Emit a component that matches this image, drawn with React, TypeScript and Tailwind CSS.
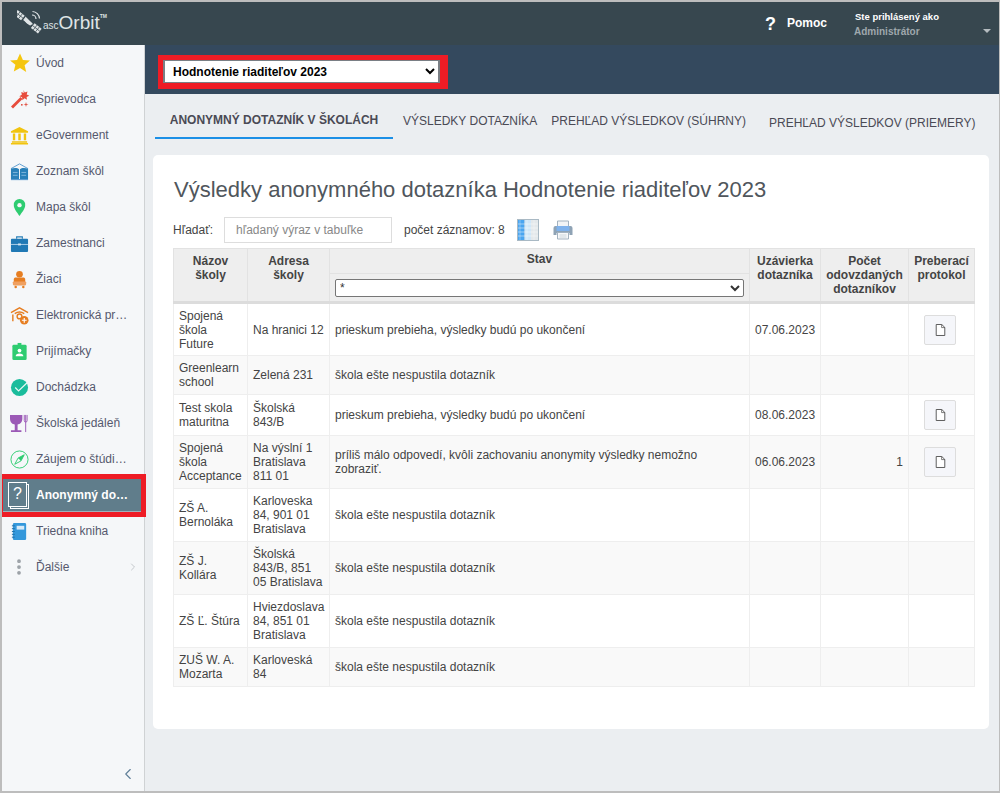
import { ChevronLeft, ChevronRight, MoreVertical } from "lucide-react";
import type { ReactNode } from "react";

const font = "font-['Liberation_Sans',Arial,sans-serif]";

function Star() {
  return (
    <svg viewBox="0 0 20 20" className="h-[20px] w-[20px]">
      <path d="M10 .5l2.900 6.400 7 .7-5.300 4.600 1.600 6.900L10 15l-6.200 3.600 1.600-6.900L.1 7.600l7-.7z" fill="#f5c60f" />
    </svg>
  );
}

function Wand() {
  return (
    <svg viewBox="0 0 20 20" className="h-[20px] w-[20px]">
      <path d="M1 17.500L10.500 8l2 2L3 19.500z" fill="#e74c3c" />
      <path d="M13.500 1l1.200 2.600 2.800-1-.8 2.900 2.600 1.300-2.700 1.200.4 2.800-2.500-1.500-2.100 1.900-.3-2.900-2.800-1 2.500-1.500-.5-2.800 2.500 1z" fill="#e74c3c" />
      <path d="M16 13l.6 1.900 1.900.6-1.900.6-.6 1.900-.6-1.900-1.900-.6 1.900-.6z" fill="#e25548" />
      <rect x="11" y="15" width="1.600" height="1.600" fill="#e25548" />
    </svg>
  );
}

function Bank() {
  return (
    <svg viewBox="0 0 20 20" className="h-[19px] w-[19px]">
      <path d="M10 1L1 5.500V7h18V5.500z" fill="#f1c40f" />
      <path d="M3 8h2.500v7H3zM8.700 8h2.600v7H8.700zM14.500 8H17v7h-2.500zM2 16h16v1.500H2zM1 18h18v1.500H1z" fill="#f1c40f" />
    </svg>
  );
}

function Book() {
  return (
    <svg viewBox="0 0 20 20" className="h-[19px] w-[19px]">
      <path d="M1 7l9-5 9 5" fill="none" stroke="#5b9bd0" strokeWidth="1" />
      <path d="M1 7c3-1 7-1 8.500 .5V18H1zM19 7c-3-1-7-1-8.500 .5V18H19z" fill="#2980b9" />
      <path d="M1 18.500h18" stroke="#5b9bd0" strokeWidth="1.200" />
      <path d="M3 11h5M3 14h5M12 11h5M12 14h5" stroke="#a9d0ee" strokeWidth=".7" />
    </svg>
  );
}

function Pin() {
  return (
    <svg viewBox="0 0 20 20" className="h-[19px] w-[19px]">
      <path d="M10 1a6 6 0 0 0-6 6.500c0 4 4 8 6 11.500 2-3.500 6-7.500 6-11.500A6 6 0 0 0 10 1z" fill="#2ecc71" />
      <circle cx="10" cy="7.500" r="2.300" fill="#f5f7f9" />
    </svg>
  );
}

function Briefcase() {
  return (
    <svg viewBox="0 0 20 20" className="h-[19px] w-[19px]">
      <path d="M7 5V3h6v2" fill="none" stroke="#2980b9" strokeWidth="1.200" />
      <rect x="1" y="5" width="18" height="14" rx="1" fill="#2079b5" />
      <path d="M1 11h18" stroke="#d5e7f4" strokeWidth=".8" />
      <rect x="8.500" y="10" width="3" height="2" fill="#d5e7f4" />
    </svg>
  );
}

function Pupil() {
  return (
    <svg viewBox="0 0 20 20" className="h-[19px] w-[19px]">
      <circle cx="10" cy="4.500" r="3.500" fill="#e67e22" />
      <path d="M4 10c0-1.500 1-2 2-2h8c1 0 2 .5 2 2v6H4z" fill="#e67e22" />
      <rect x="3" y="12" width="14" height="4" rx="1" fill="#f0a060" />
      <circle cx="6" cy="18" r="1.300" fill="#e67e22" />
      <circle cx="14" cy="18" r="1.300" fill="#e67e22" />
    </svg>
  );
}

function Cap() {
  return (
    <svg viewBox="0 0 20 20" className="h-[19px] w-[19px]">
      <path d="M1 7l9-5 9 5" fill="none" stroke="#e67e22" strokeWidth="1.500" />
      <path d="M3 9v7M5 8c3-2 7-2 10 0" fill="none" stroke="#e67e22" strokeWidth="1.500" />
      <circle cx="10" cy="11" r="2.500" fill="none" stroke="#e67e22" strokeWidth="1.500" />
      <circle cx="15" cy="15" r="4.500" fill="#e67e22" />
      <path d="M15 12.500v5M12.500 15h5" stroke="#fff" strokeWidth="1.200" />
    </svg>
  );
}

function Badge() {
  return (
    <svg viewBox="0 0 20 20" className="h-[19px] w-[19px]">
      <rect x="2.500" y="3" width="15" height="16" rx="1.500" fill="#2ecc71" />
      <rect x="8" y="1" width="4" height="3" fill="#2ecc71" />
      <circle cx="10" cy="9" r="2" fill="#fff" />
      <path d="M6 15c0-2 1.500-3 4-3s4 1 4 3z" fill="#fff" />
    </svg>
  );
}

function Check() {
  return (
    <svg viewBox="0 0 20 20" className="h-[19px] w-[19px]">
      <circle cx="10" cy="10" r="9" fill="#1abc9c" />
      <path d="M5.500 10l3.500 3.500L18 5" fill="none" stroke="#e8f8f5" strokeWidth="1.300" />
    </svg>
  );
}

function Cup() {
  return (
    <svg viewBox="0 0 20 20" className="h-[19px] w-[19px]">
      <path d="M0 1h13v4c0 4-3 6-5 6v6h4v2H1v-2h4v-6C3 11 0 9 0 5z" fill="#9b59b6" />
      <path d="M15 1v6c0 1 .5 1.500 1.500 1.500S18 8 18 7V1M16.500 1v18" fill="none" stroke="#9b59b6" strokeWidth="1" />
    </svg>
  );
}

function Compass() {
  return (
    <svg viewBox="0 0 20 20" className="h-[19px] w-[19px]">
      <circle cx="10" cy="10" r="9" fill="none" stroke="#2ecc71" strokeWidth="1" />
      <path d="M15 5l-3.500 6.500L5 15l3.500-6.500z" fill="none" stroke="#2ecc71" strokeWidth="1" />
      <path d="M15 5L8.500 8.500l3 3z" fill="#2ecc71" />
    </svg>
  );
}

function Notebook() {
  return (
    <svg viewBox="0 0 20 20" className="h-[19px] w-[19px]">
      <rect x="3" y="1" width="14" height="18" rx="1.500" fill="#3498db" />
      <path d="M2 4h3M2 7h3M2 10h3M2 13h3M2 16h3" stroke="#1f6fa8" strokeWidth="1" />
      <rect x="7" y="4" width="8" height="4" fill="#d6eaf8" />
    </svg>
  );
}

// satellite: two panels on a diagonal with a dish and signal arcs
function Logo() {
  return (
    <svg viewBox="0 0 26 26" className="h-[26px] w-[26px]">
      <g transform="rotate(38 11 13)">
        <rect x="-4.500" y="10" width="9" height="6" fill="#dfe4e6" />
        <rect x="17" y="10" width="9" height="6" fill="#dfe4e6" />
        <path d="M-1.500 10v6M1.500 10v6M20 10v6M23 10v6M-4.500 13h9M17 13h9" stroke="#37474f" strokeWidth=".7" />
        <rect x="6" y="11.500" width="9" height="3" fill="#dfe4e6" />
      </g>
      <path d="M8.500 7.500a5.500 5.500 0 0 0 7.500 7.500z" fill="#dfe4e6" />
      <path d="M15 6a4 4 0 0 1 4 4M15.500 2.500a7.500 7.500 0 0 1 7 7" fill="none" stroke="#dfe4e6" strokeWidth="1.200" />
    </svg>
  );
}

function QuestionIcon() {
  return (
    <div className="relative h-[27px] w-[21px] shrink-0">
      <div className="absolute left-[2px] top-[2px] h-[25px] w-[19px] border border-white" />
      <div className="absolute left-0 top-0 flex h-[25px] w-[19px] items-center justify-center border border-white bg-[#607d8b] text-[16px] font-normal leading-none text-white">?</div>
    </div>
  );
}

function ColumnsIcon() {
  return (
    <svg viewBox="0 0 22 22" className="h-[22px] w-[22px]">
      <rect width="22" height="22" fill="#a9b9c4" />
      <rect x="1" y="1" width="6.500" height="20" fill="#4aa5f0" />
      <rect x="7.500" y="1" width="6.500" height="20" fill="#cfe6f8" />
      <rect x="14" y="1" width="7" height="20" fill="#e3e8eb" />
      <path d="M1 5h20M1 9h20M1 13h20M1 17h20" stroke="#ffffff" strokeOpacity=".6" strokeWidth=".8" />
      <path d="M3 1v20M10 1v20M17 1v20" stroke="#ffffff" strokeOpacity=".4" strokeWidth=".8" />
    </svg>
  );
}

function PrintIcon() {
  return (
    <svg viewBox="0 0 20 20" className="h-[20px] w-[20px]">
      <path d="M4.500 1h11v6h-11z" fill="#f2f4f6" stroke="#a3b2bf" strokeWidth="1" />
      <path d="M2.500 6h15a2 2 0 0 1 2 2v7h-3v-2h-13v2h-3V8a2 2 0 0 1 2-2z" fill="#8fa3b5" />
      <rect x="3.500" y="6" width="13" height="5" fill="#7fb2ec" />
      <path d="M4.500 12.500h11v6.500h-11z" fill="#f7f8f9" stroke="#a3b2bf" strokeWidth="1" />
      <path d="M6.500 15h7M6.500 17h7" stroke="#c3ced7" strokeWidth=".8" />
    </svg>
  );
}

function DocIcon() {
  return (
    <svg viewBox="0 0 12 14" className="h-[12px] w-[11px]">
      <path d="M1 .6h6.500L11 4v9.400H1z" fill="#fff" stroke="#444" strokeWidth="1" />
      <path d="M7.300 .8V4.200H11" fill="none" stroke="#444" strokeWidth=".8" />
    </svg>
  );
}

const nav: { label: string; icon: ReactNode }[] = [
  { label: "Úvod", icon: <Star /> },
  { label: "Sprievodca", icon: <Wand /> },
  { label: "eGovernment", icon: <Bank /> },
  { label: "Zoznam škôl", icon: <Book /> },
  { label: "Mapa škôl", icon: <Pin /> },
  { label: "Zamestnanci", icon: <Briefcase /> },
  { label: "Žiaci", icon: <Pupil /> },
  { label: "Elektronická pr…", icon: <Cap /> },
  { label: "Prijímačky", icon: <Badge /> },
  { label: "Dochádzka", icon: <Check /> },
  { label: "Školská jedáleň", icon: <Cup /> },
  { label: "Záujem o štúdi…", icon: <Compass /> },
];

type Row = { name: string[]; address: string[]; state: string; date?: string; count?: string; doc?: boolean; h: string };

const running = "prieskum prebieha, výsledky budú po ukončení";
const notStarted = "škola ešte nespustila dotazník";

const rows: Row[] = [
  { name: ["Spojená", "škola", "Future"], address: ["Na hranici 12"], state: running, date: "07.06.2023", doc: true, h: "h-[53px]" },
  { name: ["Greenlearn", "school"], address: ["Zelená 231"], state: notStarted, h: "h-[39px]" },
  { name: ["Test skola", "maturitna"], address: ["Školská", "843/B"], state: running, date: "08.06.2023", doc: true, h: "h-[41px]" },
  {
    name: ["Spojená", "škola", "Acceptance"],
    address: ["Na výslní 1", "Bratislava", "811 01"],
    state: "príliš málo odpovedí, kvôli zachovaniu anonymity výsledky nemožno zobraziť.",
    date: "06.06.2023",
    count: "1",
    doc: true,
    h: "h-[53px]",
  },
  { name: ["ZŠ A.", "Bernoláka"], address: ["Karloveska", "84, 901 01", "Bratislava"], state: notStarted, h: "h-[53px]" },
  { name: ["ZŠ J.", "Kollára"], address: ["Školská", "843/B, 851", "05 Bratislava"], state: notStarted, h: "h-[53px]" },
  { name: ["ZŠ Ľ. Štúra"], address: ["Hviezdoslava", "84, 851 01", "Bratislava"], state: notStarted, h: "h-[53px]" },
  { name: ["ZUŠ W. A.", "Mozarta"], address: ["Karloveská", "84"], state: notStarted, h: "h-[39px]" },
];

function Lines({ items }: { items: string[] }) {
  return (
    <>
      {items.map((line) => (
        <div key={line} className="whitespace-nowrap">{line}</div>
      ))}
    </>
  );
}

const thClass = "border border-[#e2e2e2] border-b-[3px] border-b-[#dcdcdc] bg-[#eeeeee] px-1 pt-[5px] align-top text-center font-bold leading-[14px] text-[#444]";
const tdClass = "border border-[#eeeeee] px-[5px] py-0 align-middle leading-[14px] text-[#444]";

export default function App() {
  return (
    <div className={`${font} flex h-[793px] w-[1000px] flex-col overflow-hidden border-b-2 border-l-2 border-r border-t-2 border-[#bdbdbd] bg-[#ebeef1] text-[12px]`}>
      <header className="flex h-[43px] shrink-0 items-center justify-between bg-[#37474f] shadow-[0_1px_2px_rgba(0,0,0,0.3)]">
        <div className="ml-[15px] flex items-center pb-[4px] text-[#dfe4e6]">
          <Logo />
          <span className="mt-[9px] text-[10px] leading-none">asc</span>
          <span className="mt-[1px] text-[19px] leading-none">Orbit</span>
          <span className="mb-[10px] text-[5px] font-bold leading-none">TM</span>
        </div>
        <div className="flex items-center">
          <span className="mr-[11px] pt-[1px] text-[18px] font-bold leading-none text-white">?</span>
          <span className="mr-[28px] pb-[2px] text-[12px] font-bold text-white">Pomoc</span>
          <div className="mr-[8px] flex w-[136px] items-center justify-between pt-[1px]">
            <div>
              <div className="text-[9.500px] font-bold leading-[14px] text-white">Ste prihlásený ako</div>
              <div className="-ml-[1px] text-[10px] font-bold leading-[15px] text-[#9fa8ad]">Administrátor</div>
            </div>
            <div className="mt-[14px] h-0 w-0 border-x-[4px] border-t-[4px] border-x-transparent border-t-[#b5bcc0]" />
          </div>
        </div>
      </header>

      <div className="flex min-h-0 flex-1">
        <aside className="relative z-10 flex w-[143px] shrink-0 flex-col border-r border-[#cfd2d4] bg-[#f5f7f9]">
          <nav className="flex flex-col">
            {nav.map((item) => (
              <div key={item.label} className="flex h-[36px] items-center pl-[8px] text-[#55596e]">
                <span className="flex w-[26px] shrink-0 justify-start">{item.icon}</span>
                <span className="whitespace-nowrap">{item.label}</span>
              </div>
            ))}
            <div className="relative -mb-[4px] -mt-[3px] h-[43px] w-[144px] border-y-[5px] border-l border-r-[5px] border-[#ee1c25]">
              <div className="flex h-full items-center border-b border-[#9fb1ba] bg-[#607d8b] pl-[5px] text-white">
                <span className="flex w-[28px] shrink-0"><QuestionIcon /></span>
                <span className="whitespace-nowrap font-bold">Anonymný do…</span>
              </div>
            </div>
            <div className="flex h-[36px] items-center pl-[8px] text-[#55596e]">
              <span className="flex w-[26px] shrink-0"><Notebook /></span>
              <span>Triedna kniha</span>
            </div>
            <div className="flex h-[36px] items-center pl-[8px] text-[#55596e]">
              <span className="flex w-[26px] shrink-0 justify-start"><MoreVertical className="-ml-[1px] h-[20px] w-[20px] text-[#9aa0a6]" strokeWidth={2.5} /></span>
              <span>Ďalšie</span>
              <ChevronRight className="ml-auto mr-[5px] h-[12px] w-[12px] text-[#c4c8cc]" />
            </div>
          </nav>
          <ChevronLeft className="absolute bottom-[8px] right-[7px] h-[18px] w-[18px] text-[#5f7f98]" strokeWidth={1.500} />
        </aside>

        <main className="flex min-w-0 flex-1 flex-col">
          <div className="flex h-[49px] shrink-0 items-start bg-[#34495e] pl-[13px] pt-[10px]">
            <div className="border-b-[6px] border-l-[5px] border-r-[8px] border-t-[5px] border-[#ee1c25]">
              <select
                defaultValue="Hodnotenie riaditeľov 2023"
                className={`${font} block h-[23px] w-[277px] border-x-2 border-y border-[#7a7f85] bg-white pl-[4px] text-[12px] font-bold text-black`}
              >
                <option>Hodnotenie riaditeľov 2023</option>
              </select>
            </div>
          </div>

          <div className="flex h-[46px] shrink-0 items-start pl-[10px] text-[#4a4a55]">
            <div className="mt-[6px] flex h-[39px] w-[238px] items-center justify-center border-b-2 border-[#1b8fe6] pt-[3px] font-bold">ANONYMNÝ DOTAZNÍK V ŠKOLÁCH</div>
            <div className="ml-[10px] mt-[6px] flex h-[39px] items-center pt-[3px]">VÝSLEDKY DOTAZNÍKA</div>
            <div className="ml-[14px] mt-[6px] flex h-[39px] items-center pt-[3px]">PREHĽAD VÝSLEDKOV (SÚHRNY)</div>
            <div className="ml-[23px] mt-[8px] flex h-[39px] items-center pt-[3px]">PREHĽAD VÝSLEDKOV (PRIEMERY)</div>
          </div>

          <section className="ml-[8px] mt-[15px] h-[574px] w-[836px] rounded-[5px] bg-white px-[20px] pt-[21px]">
            <h1 className="ml-[1px] text-[22px] font-normal leading-[28px] text-[#50565c]">Výsledky anonymného dotazníka Hodnotenie riaditeľov 2023</h1>
            <div className="mt-[13px] flex h-[26px] items-center text-[#444]">
              <span className="w-[51px]">Hľadať:</span>
              <input
                placeholder="hľadaný výraz v tabuľke"
                className={`${font} h-[26px] w-[168px] border border-[#dddddd] px-[11px] text-[12px] placeholder:text-[#888]`}
              />
              <span className="ml-[12px]">počet záznamov: 8</span>
              <span className="ml-[12px] flex"><ColumnsIcon /></span>
              <span className="ml-[14px] flex"><PrintIcon /></span>
            </div>

            <table className="mt-[5px] w-[801px] table-fixed border-collapse text-[12px]">
              <colgroup>
                <col className="w-[74px]" />
                <col className="w-[82px]" />
                <col className="w-[420px]" />
                <col className="w-[71px]" />
                <col className="w-[88px]" />
                <col className="w-[66px]" />
              </colgroup>
              <thead>
                <tr className="h-[25px]">
                  <th rowSpan={2} className={thClass}>Názov<br />školy</th>
                  <th rowSpan={2} className={thClass}>Adresa<br />školy</th>
                  <th className="border border-[#e2e2e2] bg-[#eeeeee] pb-[4px] text-center align-middle font-bold text-[#444]">Stav</th>
                  <th rowSpan={2} className={thClass}>Uzávierka<br />dotazníka</th>
                  <th rowSpan={2} className={thClass}>Počet<br />odovzdaných<br />dotazníkov</th>
                  <th rowSpan={2} className={thClass}>Preberací<br />protokol</th>
                </tr>
                <tr className="h-[29px]">
                  <th className="border border-[#e2e2e2] border-b-[3px] border-b-[#dcdcdc] bg-[#eeeeee] px-[5px] pt-[5px] align-top">
                    <select className={`${font} block h-[18px] w-full rounded-[2px] border border-[#767676] bg-white pl-0 text-[12px] font-normal text-[#333]`}>
                      <option>*</option>
                    </select>
                  </th>
                </tr>
              </thead>
              <tbody>
                {rows.map((row, i) => (
                  <tr key={row.name.join(" ")} className={`${row.h} ${i % 2 === 1 ? "bg-[#f9f9f9]" : "bg-white"}`}>
                    <td className={tdClass}><Lines items={row.name} /></td>
                    <td className={tdClass}><Lines items={row.address} /></td>
                    <td className={tdClass}>{row.state}</td>
                    <td className={tdClass}>{row.date}</td>
                    <td className={`${tdClass} text-right`}>{row.count}</td>
                    <td className={tdClass}>
                      {row.doc ? (
                        <button className="ml-[10px] flex h-[30px] w-[32px] items-center justify-center rounded-[2px] border border-[#dddddd] bg-[#f5f6fa]">
                          <DocIcon />
                        </button>
                      ) : null}
                    </td>
                  </tr>
                ))}
              </tbody>
            </table>
          </section>
        </main>
      </div>
    </div>
  );
}
